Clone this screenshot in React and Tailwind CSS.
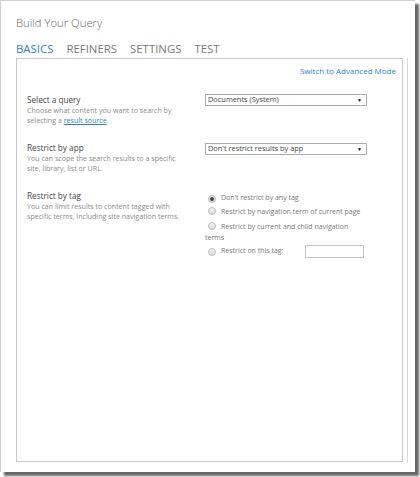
import React from 'react';

const font = { fontFamily: '"Open Sans", "Noto Sans", sans-serif' };

const Radio = ({ checked }) => (
  <span className="inline-flex items-center justify-center w-[8px] h-[8px] rounded-full border border-[#b9b9b9] bg-gradient-to-b from-[#f4f4f4] to-[#dcdcdc] align-[-1px] mr-[5px]">
    {checked && <span className="w-[4px] h-[4px] rounded-full bg-[#444]" />}
  </span>
);

const Dropdown = ({ value }) => (
  <div className="w-[162px] h-[12px] border border-[#ababab] bg-white flex items-center justify-between pl-[2px] pr-[4px]">
    <span className="text-[7.4px] leading-none text-[#444]">{value}</span>
    <span className="text-[5px] leading-none text-black">▼</span>
  </div>
);

const Section = ({ title, children, right }) => (
  <div className="flex">
    <div className="w-[178px]">
      <div className="text-[8.2px] leading-[10px] text-[#444]">{title}</div>
      <div className="text-[7.1px] leading-[10px] text-[#8a8a8a]">{children}</div>
    </div>
    <div>{right}</div>
  </div>
);

export default function App() {
  return (
    <div className="w-[420px] h-[477px] bg-white" style={font}>
      <div className="w-[415px] h-[472px] border-l border-t border-[#d0d0d0] bg-white shadow-[4px_4px_2px_rgba(0,0,0,0.6)] pl-[15px] flex flex-col">
        <div className="pt-[15px] text-[11.3px] leading-[14px] font-light text-[#666]">Build Your Query</div>
        <div className="mt-[13px] flex gap-[13px] text-[11.4px] leading-[12px] text-[#777]">
          <span className="text-[#2a7fcb]">BASICS</span>
          <span>REFINERS</span>
          <span>SETTINGS</span>
          <span>TEST</span>
        </div>
        <div className="mt-[3px] flex gap-[4px]">
          <div className="w-[387px] h-[404px] border border-[#c8c8c8] pl-[10px] pr-[6px]">
            <div className="flex justify-end pt-[7px] text-[8px] leading-[10px] text-[#2a7fcb]">
              Switch to Advanced Mode
            </div>
            <div className="mt-[19px] flex flex-col gap-[18px]">
              <Section
                title="Select a query"
                right={<div className="mt-[-1px]"><Dropdown value="Documents (System)" /></div>}
              >
                Choose what content you want to search by<br />
                selecting a <span className="text-[#2a7fcb] underline">result source</span>.
              </Section>
              <Section
                title="Restrict by app"
                right={<div className="mt-[0px]"><Dropdown value="Don't restrict results by app" /></div>}
              >
                You can scope the search results to a specific<br />
                site, library, list or URL.
              </Section>
              <Section
                title="Restrict by tag"
                right={
                  <div className="w-[162px] mt-[0px] text-[7px] text-[#777]">
                    <div className="leading-[14px] pl-[3px]"><Radio checked />Don't restrict by any tag</div>
                    <div className="leading-[14px] pl-[3px]"><Radio />Restrict by navigation term of current page</div>
                    <div className="leading-[11px] pt-[2px]">
                      <span className="pl-[3px]"><Radio />Restrict by current and child navigation</span><br />terms
                    </div>
                    <div className="flex items-center pl-[3px] mt-[2px]">
                      <Radio />
                      <span className="w-[84px]">Restrict on this tag:</span>
                      <span className="w-[59px] h-[13px] border border-[#c3c3c3] bg-white" />
                    </div>
                  </div>
                }
              >
                You can limit results to content tagged with<br />
                specific terms, including site navigation terms.
              </Section>
            </div>
          </div>
          <div className="w-px h-[405px] bg-[#dcdcdc]" />
        </div>
      </div>
    </div>
  );
}
